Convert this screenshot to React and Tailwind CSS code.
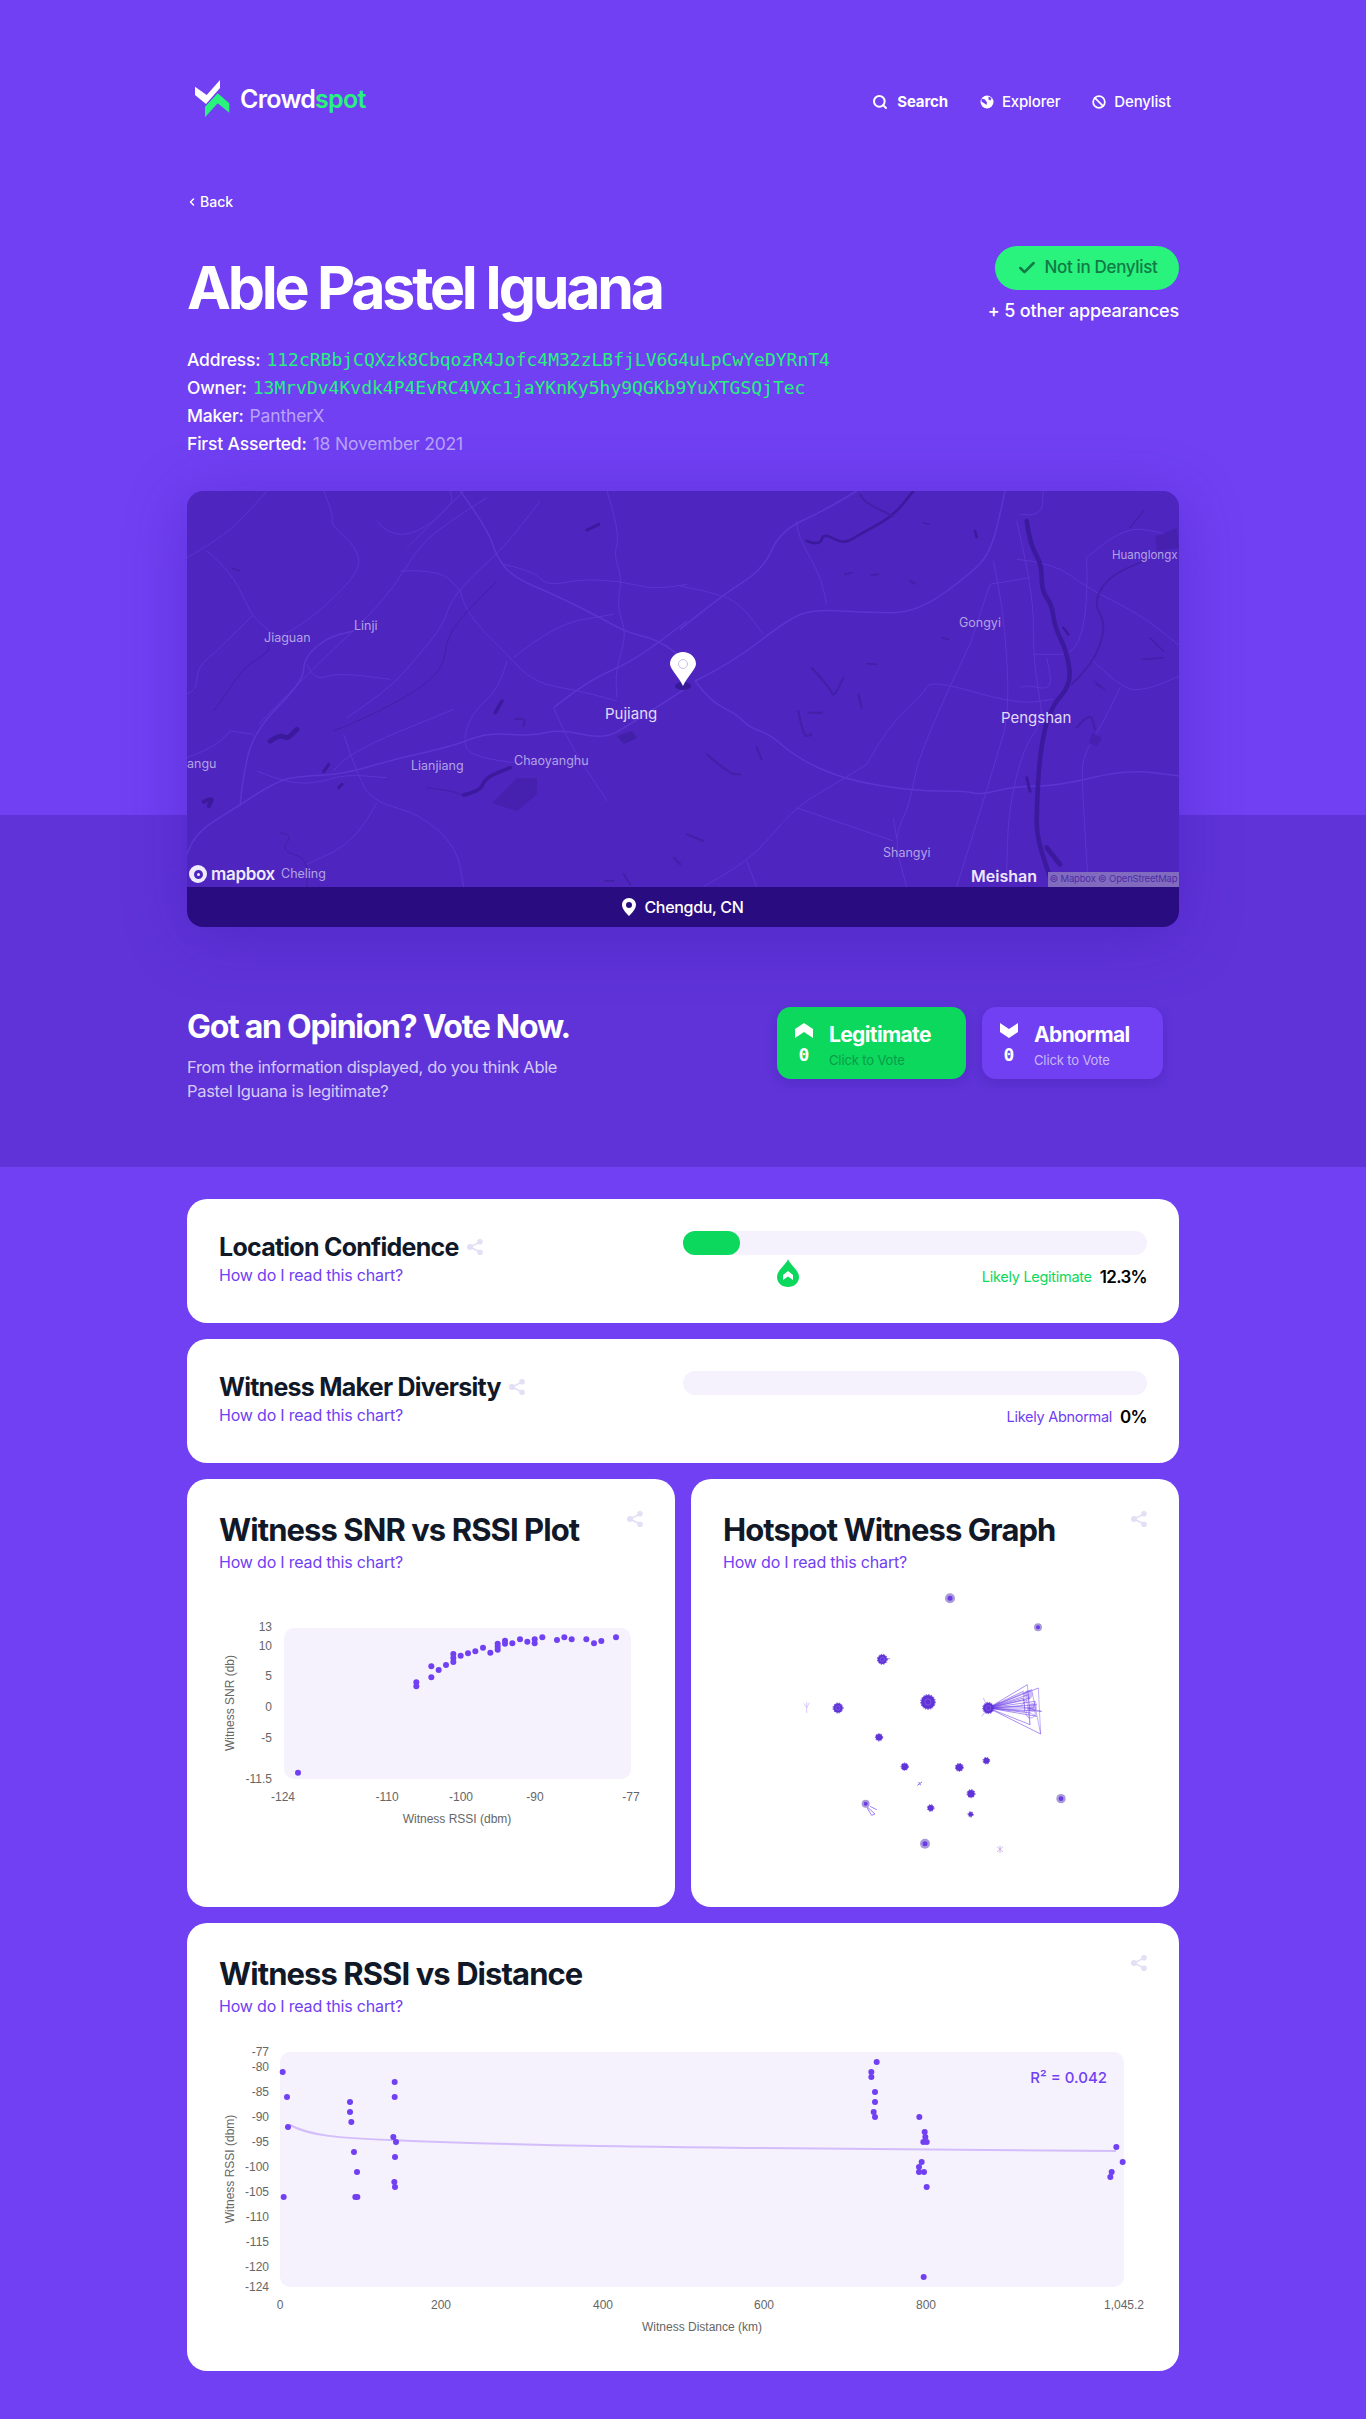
import { Search, Ban, ChevronLeft, Check } from 'lucide-react'

const mono = { fontFamily: '"DejaVu Sans Mono", monospace' }

// smooth line through points read off the zoomed crops (3x), dx moves the right-hand crop into place
const curve = (pts, dx = 0) => {
    const p = pts.map(([x, y]) => [x / 3 + dx, y / 3])
    let d = `M${p[0][0].toFixed(1)} ${p[0][1].toFixed(1)}`
    for (let i = 1; i < p.length - 1; i++) {
        const mid = [(p[i][0] + p[i + 1][0]) / 2, (p[i][1] + p[i + 1][1]) / 2]
        d += ` Q${p[i][0].toFixed(1)} ${p[i][1].toFixed(1)} ${mid[0].toFixed(1)} ${mid[1].toFixed(1)}`
    }
    const last = p[p.length - 1]
    return `${d} L${last[0].toFixed(1)} ${last[1].toFixed(1)}`
}

const RIGHT = 493

const roadsLeft = [
    [[820, 0], [900, 110], [930, 200], [980, 260], [1100, 310], [1240, 380], [1320, 425], [1410, 445], [1500, 510]],
    [[0, 1090], [20, 1030], [130, 960], [270, 870], [340, 855], [470, 850], [620, 805], [800, 765], [900, 725], [1030, 735], [1120, 715], [1250, 745], [1330, 700], [1500, 590]],
    [[160, 940], [165, 870], [200, 720], [350, 570], [350, 500], [420, 440], [500, 420]],
    [[1100, 650], [1200, 570], [1340, 510], [1500, 390]],
    [[440, 840], [470, 790], [800, 655]],
    [[1100, 650], [1130, 730], [1260, 930]],
    [[820, 300], [830, 360], [960, 490], [1040, 575], [1180, 600], [1290, 630]],
    [[640, 240], [760, 235], [820, 300]],
    [[215, 700], [350, 560], [530, 390], [620, 290], [700, 160], [790, 90], [900, 20]],
    [[980, 500], [1100, 400], [1280, 370]],
    [[480, 680], [600, 600], [690, 500], [770, 400], [790, 330], [860, 250], [950, 170], [1060, 30]],
    [[0, 200], [70, 160], [150, 100], [240, 0]],
    [[960, 510], [940, 590], [850, 670], [825, 770], [880, 800], [980, 815]],
    [[470, 730], [520, 880], [570, 935], [700, 970], [810, 1070], [830, 1188]],
    [[570, 935], [510, 1050], [360, 1120]],
    [[60, 180], [130, 240], [180, 340], [200, 380], [270, 440]],
    [[195, 375], [100, 470], [30, 530], [30, 590], [0, 610]],
    [[410, 0], [440, 70], [430, 100], [510, 170], [520, 240], [410, 350], [330, 410], [270, 440]],
    [[570, 90], [600, 130], [690, 130], [800, 40], [790, 0]],
    [[660, 170], [830, 0]],
    [[1260, 0], [1300, 130], [1280, 190], [1305, 260], [1290, 350], [1320, 430], [1285, 540], [1290, 620]],
    [[950, 220], [1040, 240], [1080, 285], [1180, 265], [1300, 270], [1400, 295], [1500, 280]],
    [[210, 840], [280, 870], [380, 880], [470, 850], [600, 860]],
    [[130, 720], [200, 730]],
    [[0, 800], [80, 770], [130, 720]],
    [[360, 520], [380, 570], [450, 545], [610, 565]],
]

const thinLeft = [
    [[440, 720], [540, 680], [690, 600], [770, 530], [780, 440], [830, 370], [930, 270]],
    [[80, 660], [130, 590], [170, 530], [250, 480], [240, 460]],
    [[720, 890], [800, 900], [830, 915]],
    [[280, 1025], [320, 1030], [280, 1080], [360, 1100], [360, 1188]],
]

const riverLeft = [
    { p: [[250, 750], [280, 730], [300, 745], [330, 715]], w: 5 },
    { p: [[830, 912], [880, 900], [895, 860], [970, 830]], w: 3.5 },
    { p: [[1200, 117], [1235, 100]], w: 3 },
    { p: [[50, 932], [80, 918], [65, 945]], w: 4 },
    { p: [[410, 842], [425, 820]], w: 3 },
    { p: [[925, 665], [945, 630]], w: 3.5 },
    { p: [[985, 685], [1015, 680], [1010, 705]], w: 2 },
    { p: [[135, 232], [158, 240]], w: 1.5 },
    { p: [[455, 890], [465, 880]], w: 3 },
    { p: [[1255, 1170], [1280, 1170]], w: 2 },
    { p: [[1310, 1150], [1330, 1180]], w: 2 },
    { p: [[1460, 1100], [1480, 1120]], w: 2 },
]

const roadsRight = [
    [[0, 415], [130, 310], [250, 235], [300, 120], [430, 60], [530, 0]],
    [[45, 570], [150, 520], [330, 380], [410, 355], [560, 365], [710, 365], [870, 250], [935, 180], [975, 0]],
    [[45, 570], [90, 630], [170, 670], [210, 710], [270, 730], [350, 800], [490, 865], [700, 900], [860, 900], [900, 912], [1010, 885], [1130, 885], [1340, 835], [1500, 855]],
    [[0, 285], [130, 310], [190, 350], [250, 430]],
    [[560, 820], [490, 865], [350, 945], [270, 1040], [200, 1110], [70, 1188]],
    [[350, 950], [640, 1050]],
    [[560, 820], [620, 710], [730, 610], [750, 565], [1010, 640], [1120, 625]],
    [[870, 460], [720, 770], [690, 940], [640, 1040], [680, 1188]],
    [[1010, 205], [1120, 215], [1220, 290], [1380, 370], [1500, 465]],
    [[1220, 200], [1320, 110], [1440, 120], [1500, 155]],
    [[1220, 200], [1230, 490], [1060, 490]],
    [[1230, 500], [1320, 590], [1390, 600], [1500, 555]],
    [[1320, 590], [1290, 660], [1210, 790], [1205, 860], [1225, 1188]],
    [[940, 210], [970, 340], [990, 660], [950, 800], [830, 1188]],
    [[1010, 90], [1060, 300], [1060, 490], [1075, 600], [1090, 690], [1030, 770], [985, 960], [980, 1150]],
    [[1020, 70], [1085, 80], [1090, 0]],
    [[930, 280], [1050, 260]],
    [[870, 460], [930, 280]],
    [[350, 90], [350, 130], [420, 250], [440, 340]],
    [[1020, 590], [1030, 580], [1120, 600], [1100, 500]],
    [[200, 1110], [230, 1188]],
    [[640, 980], [650, 1040]],
]

const riverRight = [
    { p: [[1040, 90], [1050, 160], [1085, 220], [1085, 300], [1115, 340], [1125, 410], [1160, 480], [1175, 580], [1110, 650], [1080, 780], [1070, 950], [1070, 1040], [1120, 1188]], w: 4.5 },
    { p: [[1175, 580], [1240, 520], [1280, 400], [1240, 340], [1280, 260], [1390, 210]], w: 1.8 },
    { p: [[1390, 60], [1350, 110]], w: 1.2 },
    { p: [[380, 150], [420, 165], [430, 125], [490, 160], [540, 130], [640, 75], [700, 0]], w: 2.6 },
    { p: [[640, 75], [560, 40], [540, 10]], w: 2 },
    { p: [[395, 530], [450, 590], [460, 620], [490, 560]], w: 2 },
    { p: [[535, 610], [545, 650]], w: 2 },
    { p: [[355, 660], [370, 740], [395, 730]], w: 2 },
    { p: [[385, 665], [425, 665]], w: 2 },
    { p: [[80, 790], [150, 850], [180, 850]], w: 2 },
    { p: [[230, 770], [245, 805]], w: 2 },
    { p: [[1190, 710], [1230, 660], [1245, 715]], w: 2 },
    { p: [[1410, 440], [1450, 480]], w: 1.5 },
    { p: [[1390, 505], [1450, 500]], w: 1.5 },
    { p: [[20, 1030], [70, 1050]], w: 2 },
    { p: [[495, 250], [515, 245]], w: 2 },
    { p: [[575, 252], [595, 250]], w: 2 },
    { p: [[690, 270], [705, 278]], w: 2 },
    { p: [[885, 120], [890, 138]], w: 2.5 },
    { p: [[730, 95], [748, 100]], w: 1.5 },
    { p: [[560, 518], [590, 520]], w: 1.5 },
    { p: [[785, 440], [805, 445]], w: 1.5 },
    { p: [[1150, 410], [1165, 430]], w: 2.5 },
    { p: [[1040, 860], [1050, 900]], w: 3 },
    { p: [[1100, 1070], [1140, 1120]], w: 5 },
]

const blobs = [
    { d: 'M305 312 L330 287 L350 287 L350 303 L330 320 Z', c: '#4620ae' },
    { d: 'M430 245 L445 240 L450 247 L437 253 Z', c: '#4220a8' },
    { d: 'M968 46 L990 37 L992 57 L970 60 Z', c: '#4620ae' },
    { d: 'M905 242 L915 247 L910 255 L902 252 Z', c: '#4620ae' },
    { d: 'M905 188 L915 195 L920 200 L910 195 Z', c: '#4620ae' },
]

const mapLabels = [
    { t: 'Gongyi', x: 772, y: 136 },
    { t: 'Linji', x: 167, y: 139 },
    { t: 'Jiaguan', x: 77, y: 151 },
    { t: 'Lianjiang', x: 224, y: 279 },
    { t: 'Chaoyanghu', x: 327, y: 274 },
    { t: 'angu', x: 0, y: 277 },
    { t: 'Shangyi', x: 696, y: 366 },
    { t: 'Cheling', x: 94, y: 387 },
]

const snrPoints = [
    [354, 881], [709, 610], [709, 622], [754, 562], [754, 595], [776, 573], [798, 558], [820, 525], [820, 537], [820, 549],
    [842, 530], [864, 523], [886, 517], [909, 506], [931, 521], [953, 494], [953, 503], [953, 512], [975, 485], [975, 494],
    [997, 493], [1020, 481], [1042, 488], [1064, 481], [1064, 493], [1087, 475], [1131, 483], [1153, 475], [1175, 481],
    [1219, 481], [1242, 493], [1264, 486], [1308, 475],
]

const distLeft = [
    [278, 459], [291, 534], [294, 624], [281, 834], [480, 549], [480, 579], [484, 609], [492, 699], [501, 759], [496, 834],
    [502, 834], [614, 489], [614, 534], [610, 654], [618, 669], [615, 714], [613, 789], [615, 804],
]

const distRight = [
    [560, 429], [544, 459], [544, 474], [555, 519], [555, 549], [551, 579], [555, 594], [688, 594], [704, 639], [706, 654],
    [700, 669], [710, 669], [695, 729], [687, 744], [687, 759], [702, 759], [710, 804], [701, 1074], [1279, 684], [1298, 729],
    [1265, 759], [1261, 774],
]

const graphNodes = [
    { x: 780, y: 361, r: 15, light: true },
    { x: 1044, y: 448, r: 12, light: true },
    { x: 577, y: 544, r: 14 },
    { x: 444, y: 690, r: 14 },
    { x: 714, y: 672, r: 21 },
    { x: 895, y: 690, r: 16 },
    { x: 567, y: 778, r: 10 },
    { x: 644, y: 866, r: 10 },
    { x: 808, y: 868, r: 11 },
    { x: 889, y: 848, r: 9 },
    { x: 843, y: 947, r: 11 },
    { x: 1113, y: 962, r: 14, light: true },
    { x: 527, y: 977, r: 12, light: true },
    { x: 722, y: 990, r: 9 },
    { x: 842, y: 1009, r: 7 },
    { x: 705, y: 1097, r: 15, light: true },
]

const graphEnds = [
    [1012, 620], [1045, 630], [1015, 650], [1000, 640], [1030, 690], [1055, 700], [1020, 705], [1052, 768], [1020, 740],
    [1005, 700], [1035, 670], [990, 685], [1040, 715], [1025, 635], [1010, 665], [1000, 660], [1040, 680], [1020, 660],
]

const Logo = () => (
    <svg width="35" height="38" viewBox="0 0 35 38" className="shrink-0">
        <path d="M0 6.7 L11.7 15 L25 0 L25 8 L11 24 L0 15 Z" fill="#ffffff" />
        <path d="M22.7 13.3 L34.3 23.3 L34.3 32.7 L22.7 23.3 L10 37.3 L10 26.7 Z" fill="#29f27d" />
    </svg>
)

const Globe = () => (
    <svg width="14" height="14" viewBox="0 0 14 14">
        <circle cx="7" cy="7" r="6.5" fill="#ffffff" />
        <path d="M1.5 3.5 L5 4.5 L7 7.5 L6.5 10 L4.5 8.5 L1.5 6.5 Z M8.5 1.5 L11.5 3 L10.5 5.5 L8.5 4.5 Z" fill="#7040f2" />
    </svg>
)

const Share = ({ className }) => (
    <svg width="16" height="16" viewBox="0 0 16 16" className={className}>
        <path d="M13 3 L3 8 L13 13" stroke="#e3dff5" strokeWidth="1.6" fill="none" />
        <circle cx="13" cy="2.8" r="2.8" fill="#e3dff5" />
        <circle cx="3" cy="8" r="3" fill="#e3dff5" />
        <circle cx="13" cy="13.2" r="2.8" fill="#e3dff5" />
    </svg>
)

const ChevronShape = ({ down }) => (
    <svg width="18" height="15" viewBox="0 0 18 15" className={down ? 'rotate-180' : ''}>
        <path d="M9 0 L18 6 L18 15 L9 9 L0 15 L0 6 Z" fill="#ffffff" />
    </svg>
)

const VoteButton = ({ label, down, className, subClassName }) => (
    <button className={`flex h-[72px] items-start gap-[16px] rounded-[14px] pl-[18px] pt-[16px] text-left shadow-[0_4px_12px_rgba(40,10,120,0.18)] ${className}`}>
        <div className="flex w-[18px] flex-col items-center gap-[6px]">
            <ChevronShape down={down} />
            <span className="text-[18px] leading-[22px] font-bold text-white" style={mono}>0</span>
        </div>
        <div>
            <div className="text-[21px] leading-[24px] font-bold tracking-[-0.03em] text-white">{label}</div>
            <div className={`mt-[5px] text-[13px] leading-[16px] tracking-[-0.01em] ${subClassName}`}>Click to Vote</div>
        </div>
    </button>
)

const ChartLink = () => (
    <a className="block text-[16px] leading-[24px] tracking-[-0.012em] text-[#7040f2]">How do I read this chart?</a>
)

const ScoreCard = ({ title, children }) => (
    <div className="flex h-[124px] justify-between rounded-[20px] bg-white p-[32px]">
        <div>
            <div className="flex items-center gap-[8px]">
                <h3 className="text-[25px] leading-[32px] font-bold tracking-[-0.03em] text-[#111827]">{title}</h3>
                <Share />
            </div>
            <ChartLink />
        </div>
        <div className="relative w-[464px]">{children}</div>
    </div>
)

const ChartCard = ({ title, className, children }) => (
    <div className={`relative rounded-[20px] bg-white px-[32px] ${className}`}>
        <Share className="absolute top-[32px] right-[32px]" />
        <h3 className="text-[31px] leading-[40px] font-bold tracking-[-0.03em] text-[#111827]">{title}</h3>
        <ChartLink />
        {children}
    </div>
)

const axisText = { fontFamily: '"Liberation Sans", sans-serif', fontSize: 12, fill: '#666666' }

const SnrChart = () => (
    <svg width="424" height="240" viewBox="219 1600 424 240" className="mt-[25px] block">
        <rect x="284" y="1629" width="347" height="151" rx="10" fill="#f5f2fd" />
        {[['13', 1632], ['10', 1651], ['5', 1681], ['0', 1712], ['-5', 1743], ['-11.5', 1784]].map(([t, y]) => (
            <text key={t} x="272" y={y} textAnchor="end" style={axisText}>{t}</text>
        ))}
        {[['-124', 283], ['-110', 387], ['-100', 461], ['-90', 535], ['-77', 631]].map(([t, x]) => (
            <text key={t} x={x} y="1802" textAnchor="middle" style={axisText}>{t}</text>
        ))}
        <text x="457" y="1824" textAnchor="middle" style={axisText}>Witness RSSI (dbm)</text>
        <text transform="translate(234 1704) rotate(-90)" textAnchor="middle" style={axisText}>Witness SNR (db)</text>
        {snrPoints.map(([x, y], i) => (
            <circle key={i} cx={180 + x / 3} cy={1480 + y / 3} r="3" fill="#7040f2" />
        ))}
    </svg>
)

const WitnessGraph = () => (
    <svg width="424" height="310" viewBox="99 315 1272 930" className="mt-[9px] block">
        {graphEnds.map(([x, y], i) => (
            <path key={i} d={`M895 690 L${x} ${y}`} stroke="#6a3be6" strokeOpacity="0.7" strokeWidth="2.4" fill="none" />
        ))}
        {graphEnds.slice(0, 12).map(([x, y], i) => (
            <path key={i} d={`M${x} ${y} L${graphEnds[i + 6][0]} ${graphEnds[i + 6][1]}`} stroke="#6a3be6" strokeOpacity="0.6" strokeWidth="2" fill="none" />
        ))}
        <path d="M880 660 L895 690 M875 715 L895 690 M930 672 L895 690" stroke="#7040f2" strokeOpacity="0.6" strokeWidth="2" fill="none" />
        <path d="M350 672 L350 705 M342 676 L350 690 L358 674" stroke="#c9b4f8" strokeWidth="2" fill="none" />
        <path d="M682 922 L696 912 M686 912 L692 922" stroke="#8f6cf2" strokeWidth="3" fill="none" />
        <path d="M921 1106 L939 1122 M939 1106 L921 1122 M930 1103 L930 1125" stroke="#b595e8" strokeWidth="2" fill="none" />
        <path d="M530 985 L555 1008 L545 1012 L535 996 Z M540 985 L560 995" stroke="#8f6cf2" strokeWidth="2.6" fill="none" />
        {graphNodes.map((n) => (
            <g key={`${n.x}-${n.y}`}>
                {n.light && <circle cx={n.x} cy={n.y} r={n.r} fill="#a99bd8" />}
                <circle cx={n.x} cy={n.y} r={n.light ? n.r * 0.5 : n.r} fill={n.light ? '#6a3be6' : '#5f33d8'} />
                {!n.light && <circle cx={n.x} cy={n.y} r={n.r + 1} fill="none" stroke="#5f33d8" strokeWidth="3" strokeDasharray="4 4" />}
                {!n.light && n.r > 12 && <circle cx={n.x} cy={n.y} r={n.r * 0.45} fill="none" stroke="#9a80e8" strokeWidth="1.4" />}
            </g>
        ))}
        <circle cx="1015" cy="650" r="13" fill="#7040f2" fillOpacity="0.35" />
        <circle cx="1028" cy="688" r="13" fill="#7040f2" fillOpacity="0.35" />
        <circle cx="1022" cy="706" r="14" fill="none" stroke="#7040f2" strokeOpacity="0.7" strokeWidth="2" />
        <path d="M577 544 L600 542" stroke="#7040f2" strokeWidth="2" />
    </svg>
)

const DistanceChart = () => (
    <svg width="928" height="300" viewBox="219 2040 928 300" className="mt-[21px] block">
        <rect x="280" y="2053" width="844" height="235" rx="10" fill="#f5f2fd" />
        {[['-77', 2053], ['-80', 2068], ['-85', 2093], ['-90', 2118], ['-95', 2143], ['-100', 2168], ['-105', 2193], ['-110', 2218], ['-115', 2243], ['-120', 2268], ['-124', 2288]].map(([t, y]) => (
            <text key={t} x="269" y={y + 4} textAnchor="end" style={axisText}>{t}</text>
        ))}
        {[['0', 280], ['200', 441], ['400', 603], ['600', 764], ['800', 926], ['1,045.2', 1124]].map(([t, x]) => (
            <text key={t} x={x} y="2310" textAnchor="middle" style={axisText}>{t}</text>
        ))}
        <text x="702" y="2332" textAnchor="middle" style={axisText}>Witness Distance (km)</text>
        <text transform="translate(234 2170) rotate(-90)" textAnchor="middle" style={axisText}>Witness RSSI (dbm)</text>
        <path d="M290 2126 C310 2137 340 2139 390 2141 C500 2146 600 2147 760 2149 C900 2151 1010 2151 1116 2152" stroke="#d3bdfb" strokeWidth="2" fill="none" />
        {distLeft.map(([x, y], i) => (
            <circle key={i} cx={190 + x / 3} cy={1920 + y / 3} r="3" fill="#7040f2" />
        ))}
        {distRight.map(([x, y], i) => (
            <circle key={i} cx={690 + x / 3} cy={1920 + y / 3} r="3" fill="#7040f2" />
        ))}
        <text x="1107" y="2084" textAnchor="end" fontFamily="Inter, sans-serif" fontSize="15" fontWeight="500" fill="#7040f2">R² = 0.042</text>
    </svg>
)

const MapCanvas = () => (
    <div className="relative h-[396px] overflow-hidden bg-[#4e25bf]">
        <svg width="992" height="396" viewBox="0 0 992 396" className="block">
            <g fill="none" className="blur-[0.4px]">
                {roadsLeft.map((r, i) => (
                    <path key={i} d={curve(r)} stroke="#5c34d0" strokeWidth={i < 4 ? 1.5 : 1} />
                ))}
                {roadsRight.map((r, i) => (
                    <path key={i} d={curve(r, RIGHT)} stroke="#5c34d0" strokeWidth={i < 3 ? 1.5 : 1} />
                ))}
                {thinLeft.map((r, i) => (
                    <path key={i} d={curve(r)} stroke="#4220a8" strokeWidth="1" />
                ))}
                {riverLeft.map((r, i) => (
                    <path key={i} d={curve(r.p)} stroke={r.w < 3 ? '#4220a8' : '#3b1a9e'} strokeWidth={r.w} strokeLinecap="round" />
                ))}
                {riverRight.map((r, i) => (
                    <path key={i} d={curve(r.p, RIGHT)} stroke={r.w < 2.5 ? '#4220a8' : '#3b1a9e'} strokeWidth={r.w} strokeLinecap="round" />
                ))}
            </g>
            {blobs.map((b, i) => (
                <path key={i} d={b.d} fill={b.c} />
            ))}
            {mapLabels.map((l) => (
                <text key={l.t} x={l.x} y={l.y} fontFamily="Inter, sans-serif" fontSize="12.5" fill="#b3a3e6">{l.t}</text>
            ))}
            <text x="925" y="68" fontFamily="Inter, sans-serif" fontSize="11.5" fill="#b3a3e6">Huanglongx</text>
            <text x="418" y="228" fontFamily="Inter, sans-serif" fontSize="15" fill="#e2daf8">Pujiang</text>
            <text x="814" y="232" fontFamily="Inter, sans-serif" fontSize="15" fill="#e2daf8">Pengshan</text>
            <text x="784" y="391" fontFamily="Inter, sans-serif" fontSize="16" fontWeight="600" fill="#eee8fc">Meishan</text>
            <ellipse cx="496" cy="195" rx="8" ry="4" fill="#2f1488" fillOpacity="0.7" />
            <path d="M496 195 C492 186 483 178 483 173 C483 166 489 161 496 161 C503 161 509 166 509 173 C509 178 500 186 496 195 Z" fill="#ffffff" />
            <circle cx="496" cy="173" r="4.5" fill="#ffffff" stroke="#c9c2dc" strokeWidth="1" />
        </svg>
        <div className="absolute bottom-[4px] left-[2px] flex items-center gap-[4px]">
            <span className="flex h-[18px] w-[18px] items-center justify-center rounded-full bg-[#efeafc]">
                <span className="h-[9px] w-[9px] rounded-full border-[3px] border-[#4e25bf]" />
            </span>
            <span className="text-[17px] leading-[18px] font-semibold tracking-[-0.02em] text-[#efeafc]">mapbox</span>
        </div>
        <div className="absolute right-0 bottom-0 flex h-[15px] w-[131px] items-center justify-center whitespace-nowrap bg-[#806bbe] text-[9.5px] tracking-[-0.02em] text-[#4e2ca8]">
            © Mapbox © OpenStreetMap
        </div>
    </div>
)

export default function App() {
    return (
        <div className="min-h-screen bg-[#7040f2]" style={{ fontFamily: 'Inter, sans-serif' }}>
            {/*Hero*/}
            <section className="flex flex-col">
                <div className="mx-auto flex w-[992px] flex-col pt-[80px]">
                    <header className="flex items-center justify-between px-[8px]">
                        <div className="flex items-center gap-[10px]">
                            <Logo />
                            <span className="text-[25px] leading-[38px] font-semibold tracking-[-0.03em] text-white">
                                Crowd<span className="text-[#29f27d]">spot</span>
                            </span>
                        </div>
                        <nav className="mt-[6px] flex items-center gap-[32px] text-[15px] leading-[20px] font-medium tracking-[-0.01em] text-white">
                            <a className="flex items-center gap-[9px] font-bold"><Search size={16} strokeWidth={3} />Search</a>
                            <a className="flex items-center gap-[8px]"><Globe />Explorer</a>
                            <a className="flex items-center gap-[8px]"><Ban size={14} strokeWidth={3} />Denylist</a>
                        </nav>
                    </header>

                    <a className="mt-[74px] -ml-[1px] flex items-center gap-[2px] text-[14px] leading-[20px] font-medium text-white">
                        <ChevronLeft size={12} strokeWidth={3} />Back
                    </a>

                    <div className="mt-[34px] flex items-start justify-between">
                        <h1 className="mt-[12px] text-[59px] leading-[60px] font-bold tracking-[-0.055em] text-white">Able Pastel Iguana</h1>
                        <div className="flex flex-col items-end">
                            <div className="flex h-[44px] w-[184px] items-center justify-center gap-[8px] rounded-full bg-[#29f27d] text-[17px] font-medium tracking-[-0.02em] text-[#127a45]">
                                <Check size={20} strokeWidth={3} />Not in Denylist
                            </div>
                            <div className="mt-[9px] text-[18px] leading-[24px] font-medium tracking-[-0.01em] text-white">+ 5 other appearances</div>
                        </div>
                    </div>

                    <dl className="mt-[23px] text-[17.5px] leading-[28px] font-medium tracking-[-0.01em] text-white">
                        <div className="flex gap-[6px]"><dt>Address:</dt><dd className="text-[18px] font-normal tracking-normal text-[#29f27d]" style={mono}>112cRBbjCQXzk8CbqozR4Jofc4M32zLBfjLV6G4uLpCwYeDYRnT4</dd></div>
                        <div className="flex gap-[6px]"><dt>Owner:</dt><dd className="text-[18px] font-normal tracking-normal text-[#29f27d]" style={mono}>13MrvDv4Kvdk4P4EvRC4VXc1jaYKnKy5hy9QGKb9YuXTGSQjTec</dd></div>
                        <div className="flex gap-[6px]"><dt>Maker:</dt><dd className="font-normal text-[#b9a3f8]">PantherX</dd></div>
                        <div className="flex gap-[6px]"><dt>First Asserted:</dt><dd className="font-normal text-[#b9a3f8]">18 November 2021</dd></div>
                    </dl>

                    {/*Map*/}
                    <div className="relative z-10 mt-[33px] -mb-[112px] overflow-hidden rounded-[16px] shadow-[0_10px_60px_rgba(60,20,170,0.35)]">
                        <MapCanvas />
                        <div className="flex h-[40px] items-center justify-center gap-[8px] bg-[#290c7f] text-[16px] font-medium tracking-[-0.02em] text-white">
                            <svg width="14" height="18" viewBox="0 0 14 18">
                                <path fillRule="evenodd" d="M7 0 C10.9 0 14 3 14 6.8 C14 11 9.5 15.5 7 18 C4.5 15.5 0 11 0 6.8 C0 3 3.1 0 7 0 Z M7 4 A3 3 0 1 0 7 10 A3 3 0 1 0 7 4 Z" fill="#ffffff" />
                            </svg>
                            Chengdu, CN
                        </div>
                    </div>
                </div>
            </section>

            {/*Vote*/}
            <section className="h-[352px] bg-[#5f33d8] pt-[192px]">
                <div className="mx-auto flex w-[992px] items-start justify-between pr-[16px]">
                    <div>
                        <h2 className="text-[32px] leading-[40px] font-bold tracking-[-0.04em] text-white">Got an Opinion? Vote Now.</h2>
                        <p className="mt-[8px] w-[385px] text-[16.5px] leading-[24px] tracking-[-0.02em] text-[#d6caf8]">
                            From the information displayed, do you think Able Pastel Iguana is legitimate?
                        </p>
                    </div>
                    <div className="flex gap-[16px]">
                        <VoteButton label="Legitimate" className="w-[189px] bg-[#0bd85d]" subClassName="text-[#0a9a49]" />
                        <VoteButton label="Abnormal" down className="w-[181px] bg-[#7040f2]" subClassName="text-[#c9b8fb]" />
                    </div>
                </div>
            </section>

            {/*Charts*/}
            <section className="mx-auto flex w-[992px] flex-col gap-[16px] pt-[32px] pb-[47px]">
                <ScoreCard title="Location Confidence">
                    <div className="h-[24px] rounded-full bg-[#f5f2fd]">
                        <div className="h-[24px] w-[57px] rounded-full bg-[#0bd85d]" />
                    </div>
                    <svg width="22" height="28" viewBox="0 0 22 28" className="absolute top-[28px] left-[94px]">
                        <path d="M11 0 C13 6 22 11 22 18 C22 24 17 28 11 28 C5 28 0 24 0 18 C0 11 9 6 11 0 Z" fill="#0bd85d" />
                        <path d="M11 12 L16 16 L16 21 L11 17.5 L6 21 L6 16 Z" fill="#ffffff" />
                    </svg>
                    <div className="mt-[10px] flex items-center justify-end gap-[8px]">
                        <span className="text-[14.5px] leading-[24px] tracking-[-0.02em] text-[#0bd85d]">Likely Legitimate</span>
                        <span className="text-[17px] leading-[24px] font-semibold tracking-[-0.04em] text-black">12.3%</span>
                    </div>
                </ScoreCard>

                <ScoreCard title="Witness Maker Diversity">
                    <div className="h-[24px] rounded-full bg-[#f5f2fd]" />
                    <div className="mt-[10px] flex items-center justify-end gap-[8px]">
                        <span className="text-[14.5px] leading-[24px] tracking-[-0.02em] text-[#7040f2]">Likely Abnormal</span>
                        <span className="text-[17px] leading-[24px] font-semibold tracking-[-0.04em] text-black">0%</span>
                    </div>
                </ScoreCard>

                <div className="grid grid-cols-2 gap-[16px]">
                    <ChartCard title="Witness SNR vs RSSI Plot" className="h-[428px] pt-[31px]">
                        <SnrChart />
                    </ChartCard>
                    <ChartCard title="Hotspot Witness Graph" className="h-[428px] pt-[31px]">
                        <WitnessGraph />
                    </ChartCard>
                </div>

                <ChartCard title="Witness RSSI vs Distance" className="h-[448px] pt-[31px]">
                    <DistanceChart />
                </ChartCard>
            </section>
        </div>
    )
}
